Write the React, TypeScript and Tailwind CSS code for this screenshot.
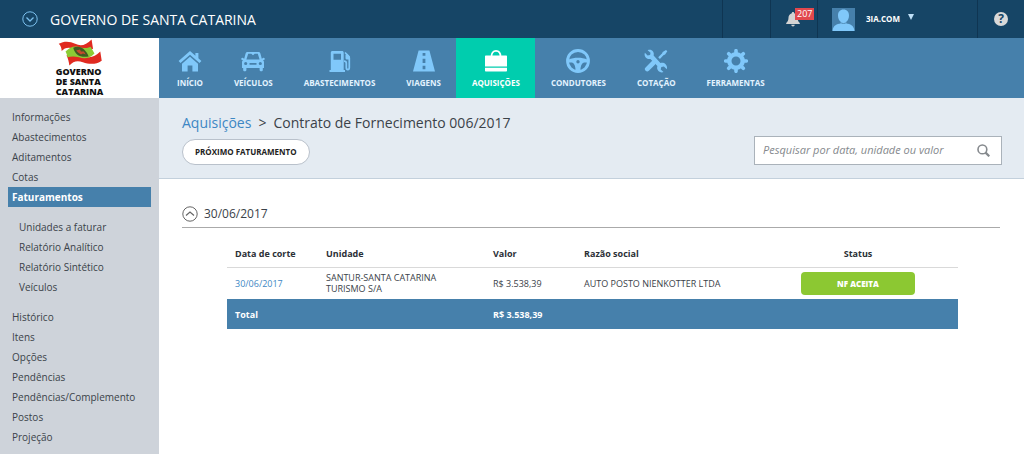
import { useState } from 'react';
import type { ReactNode } from 'react';

interface NavItem {
  label: string;
  icon: ReactNode;
  active?: boolean;
}

interface Billing {
  date: string;
  unit: string;
  value: string;
  company: string;
  status: string;
}

const navItems: NavItem[] = [
  {
    label: 'INÍCIO',
    icon: (
      <>
        <path d="M12 2 0.6 12l1.9 2.1L12 5.8l9.500 8.300 1.900-2.100-3-2.700V4h-3v2.700z" />
        <path d="M12 7.800 4 14.800V22.500h5.600v-6h4.800v6H20v-7.700z" />
      </>
    ),
  },
  {
    label: 'VEÍCULOS',
    icon: (
      <path
        fillRule="evenodd"
        d="M6.500 3h11c1 0 1.700.6 1.900 1.500l1.400 5.300 1.200-.9c.6-.4 1.500 0 1.700.7.200.7-.2 1.200-.9 1.300l-.9.200c.8.600 1.100 1.400 1.100 2.400V19h-1.200v2c0 .8-.6 1.300-1.500 1.300s-1.700-.5-1.700-1.300v-2H5.400v2c0 .8-.7 1.300-1.700 1.300S2.200 21.800 2.200 21v-2H1v-5.500c0-1 .3-1.800 1.100-2.400l-.9-.2C.5 10.800.1 10.300.3 9.600.5 8.900 1.400 8.500 2 8.900l1.200.9 1.400-5.300C4.800 3.600 5.500 3 6.500 3zm.7 1.700L5.400 10.600h13.200l-1.800-5.900h-3.100L12 6.200l-1.700-1.500zM4.700 12.900a1.600 1.600 0 1 0 0 3.200 1.600 1.600 0 0 0 0-3.200zm14.600 0a1.600 1.600 0 1 0 0 3.200 1.600 1.600 0 0 0 0-3.200zM8.500 14v1.800h7V14z"
      />
    ),
  },
  {
    label: 'ABASTECIMENTOS',
    icon: (
      <>
        <path fillRule="evenodd" d="M4.500 2h9.500c1 0 1.700.7 1.700 1.700V21H17v2H1.500v-2h1.300V3.700C2.800 2.700 3.500 2 4.500 2zm1 2.800v6h7.500v-6z" />
        <path d="M17 3.500l3.300 3.300c.7.700 1 1.400 1 2.300v9.300c0 1.500-.6 2.200-1.500 2.200s-1.500-.7-1.500-2v-4.400c0-1.300-.7-2-2.300-2" fill="none" stroke="currentColor" strokeWidth="1.7" />
        <path d="M17.500 6v3.200c0 .8.900 1.300 2 1.300h2V7.300L18.800 4.500z" />
      </>
    ),
  },
  {
    label: 'VIAGENS',
    icon: (
      <path fillRule="evenodd" d="M6.600 1.500h10.800L23 22.500H1zM10.600 4v2.800h2.800V4zm0 5.800v4.200h2.800V9.800zm0 7v3.400h2.800v-3.400z" />
    ),
  },
  {
    label: 'AQUISIÇÕES',
    active: true,
    icon: (
      <>
        <path d="M7.500 7.500C7.500 4.200 9 1.800 12 1.800s4.500 2.400 4.500 5.700" fill="none" stroke="currentColor" strokeWidth="1.7" />
        <path d="M2 6.500h20c.6 0 1 .4 1 1v10H1v-10c0-.6.400-1 1-1zM1 18.800h22v2.700c0 .6-.4 1-1 1H2c-.6 0-1-.4-1-1z" />
      </>
    ),
  },
  {
    label: 'CONDUTORES',
    icon: (
      <>
        <circle cx="12" cy="12" r="10.5" fill="none" stroke="currentColor" strokeWidth="2.8" />
        <path fillRule="evenodd" d="M2.500 10.500C5.500 9.300 8.600 8.800 12 8.800s6.500.5 9.500 1.700v3h-2.600c-2.700 0-4.300 2.600-4.500 8H9.600c-.2-5.400-1.800-8-4.500-8H2.500zM12 11a1.700 1.700 0 1 0 0 3.400 1.700 1.700 0 0 0 0-3.400z" />
      </>
    ),
  },
  {
    label: 'COTAÇÃO',
    icon: (
      <>
        <path d="M22 1l1.300 1.300-2.200 3.200-1.700.7-3.500 3.700-1.700-1.700L18 4.600l.7-1.600z" />
        <path d="M9.300 14 3.200 20.100" stroke="currentColor" strokeWidth="4.6" strokeLinecap="round" />
        <path d="M3.600 1.200c2.200-.8 4.300-.3 5.400 1.200.9 1.300 1 2.500.6 4l6.800 7.600c2-.5 3.900-.1 5.200 1.200 1.400 1.400 1.800 3.300 1.200 5l-2.900-2.800-2.600.6-.6 2.600 2.800 2.500c-1.700.7-3.700.3-5.100-1.100-1.300-1.300-1.600-3.100-1-4.900L6.400 9.900c-1.700.3-3.300 0-4.500-1.200C.6 7.400.2 5.500.9 3.800l2.700 2.700L6.100 6l.4-2.300z" />
      </>
    ),
  },
  {
    label: 'FERRAMENTAS',
    icon: (
      <>
        <circle cx="12" cy="12" r="6.7" fill="none" stroke="currentColor" strokeWidth="4.4" />
        <path
          d="M12 4V1.700M12 20v2.300M4 12H1.700M20 12h2.300M6.300 6.300 4.700 4.700M17.700 17.700l1.600 1.600M6.300 17.700l-1.600 1.600M17.700 6.300l1.600-1.600"
          fill="none"
          stroke="currentColor"
          strokeWidth="3.6"
          strokeLinecap="round"
        />
      </>
    ),
  },
];

const menuTop = ['Informações', 'Abastecimentos', 'Aditamentos', 'Cotas', 'Faturamentos'];
const menuSub = ['Unidades a faturar', 'Relatório Analítico', 'Relatório Sintético', 'Veículos'];
const menuBottom = ['Histórico', 'Itens', 'Opções', 'Pendências', 'Pendências/Complemento', 'Postos', 'Projeção'];

const billings: Billing[] = [
  {
    date: '30/06/2017',
    unit: 'SANTUR-SANTA CATARINA TURISMO S/A',
    value: 'R$ 3.538,39',
    company: 'AUTO POSTO NIENKOTTER LTDA',
    status: 'NF ACEITA',
  },
];

function TopBar() {
  return (
    <header className="flex h-[38px] items-stretch bg-[#164566] text-white">
      <div className="flex flex-1 items-center gap-3 pl-[22px]">
        <button aria-label="Trocar órgão" className="text-[#7cc0ee]">
          <svg className="h-4 w-4" viewBox="0 0 16 16" fill="none" stroke="currentColor">
            <circle cx="8" cy="8" r="7.2" />
            <path d="M4.500 6.500 8 10l3.500-3.500" strokeWidth="1.3" />
          </svg>
        </button>
        <span className="text-[14px]">GOVERNO DE SANTA CATARINA</span>
      </div>
      <div className="w-12 border-l border-[#0f3552]" />
      <button aria-label="Notificações" className="relative w-[47px] border-l border-[#0f3552]">
        <svg className="absolute left-[15px] top-[12px] h-[15px] w-[14px] text-[#d3d3d3]" viewBox="0 0 14 15" fill="currentColor">
          <path d="M7 0c.7 0 1.200.5 1.200 1.200C10.300 1.800 11.500 3.600 11.500 5.500c0 2.500.8 4.200 2.300 5.500v1H.2v-1C1.700 9.700 2.500 8 2.500 5.500c0-1.900 1.200-3.700 3.300-4.300C5.800.5 6.300 0 7 0zM5.300 12.800h3.400c0 1-.7 1.700-1.700 1.700s-1.700-.7-1.700-1.700z" />
        </svg>
        <span className="absolute left-[24px] top-[8px] bg-[#e2484d] px-[2px] text-[9px] leading-[12px]">207</span>
      </button>
      <button className="flex w-40 items-center border-l border-[#0f3552] pl-[14px] text-[8px] font-bold">
        <svg className="mr-[11px] h-[23px] w-[23px]" viewBox="0 0 23 23">
          <path d="M0 0h23v23H0z" fill="#4680ab" />
          <path d="M11.500 1.500c3.500 0 5.500 2.500 5.500 6 0 2.700-1.100 5-2.700 6.300v1.700c3.700.6 7.500 1.900 8 6.500v1H.700v-1c.5-4.600 4.300-5.900 8-6.500v-1.700C7.100 12.500 6 10.200 6 7.500c0-3.500 2-6 5.500-6z" fill="#80c8fa" />
          <path d="M8.500 14.600c2 1.200 4 1.200 6 0" fill="none" stroke="#4680ab" strokeWidth=".8" />
        </svg>
        3IA.COM
        <svg className="mb-1 ml-2 h-[6px] w-[6px] text-[#bfe0f7]" viewBox="0 0 6 6" fill="currentColor">
          <path d="M0 0h6L3 6z" />
        </svg>
      </button>
      <button aria-label="Ajuda" className="flex w-[47px] items-center justify-center border-l border-[#0f3552]">
        <span className="flex h-[14px] w-[14px] items-center justify-center rounded-full bg-[#d9d9d9] text-[12px] font-bold text-[#164566]">?</span>
      </button>
    </header>
  );
}

function Logo() {
  return (
    <div className="flex h-[60px] flex-col items-center bg-white pt-px">
      <svg className="h-[28px] w-[48px] shrink-0" viewBox="0 0 48 29">
        <path d="M2 5c6-3.500 12-2.500 17 0 6 3 11 1.500 17-4.500l1.500 9.500C30 14 24 12 18 10 12 8 8 9 5 12.500 5 9.500 4 7 2 5z" fill="#e02a20" />
        <path d="M10 17c7-3 12-1.500 17 .5 7 2.500 12 1.500 18-4.500l1.500 9.500C40 27 33 26 27 24c-6-2-10-1-14 3.500-.5-4-1.500-8-3-10.500z" fill="#e02a20" />
        <path d="M9 13c4-4 8-6 13-5 5 1.500 9 2 13 0l4 7c-5 5-10 6-16 4-5-1.500-9-1-12 0 0-2-1-4-2-6z" fill="#8ccb35" />
        <path d="M17 9c6-2.500 12 0 16 9-8 1.500-14-1-16-9z" fill="#3f5a22" />
        <path d="M20 12l4-1 1 2 3 0 2 3-3-1-2 1-3-2z" fill="#c54a2c" />
      </svg>
      <div className="text-[9px] font-extrabold leading-[10px] text-[#111]">
        GOVERNO
        <br />
        DE SANTA
        <br />
        CATARINA
      </div>
    </div>
  );
}

function SideLink({ label, active }: { label: string; active?: boolean }) {
  return (
    <a
      href="#"
      className={`block px-1 ${active ? 'bg-[#4680ab] font-bold text-white' : 'text-[#3b4249]'}`}
    >
      {label}
    </a>
  );
}

function Sidebar() {
  return (
    <aside className="w-[159px] shrink-0 bg-[#ced3da]">
      <Logo />
      <nav className="px-2 pb-1 pt-[9px] text-[10px] leading-[20px]">
        <ul>
          {menuTop.map((label) => (
            <li key={label}>
              <SideLink label={label} active={label === 'Faturamentos'} />
            </li>
          ))}
        </ul>
        <ul className="my-[10px] pl-[7px]">
          {menuSub.map((label) => (
            <li key={label}>
              <SideLink label={label} />
            </li>
          ))}
        </ul>
        <ul>
          {menuBottom.map((label) => (
            <li key={label}>
              <SideLink label={label} />
            </li>
          ))}
        </ul>
      </nav>
    </aside>
  );
}

function MainNav() {
  return (
    <nav className="flex h-[60px] bg-[#4680ab] pl-[2px]">
      {navItems.map((item) => (
        <a
          key={item.label}
          href="#"
          className={`flex flex-col items-center pl-4 pr-[15px] pt-[11px] text-[8px] font-bold leading-[14px] ${
            item.active ? 'bg-[#00cdae] text-white' : 'text-[#e3f3ff]'
          }`}
        >
          <svg className={`mb-[3px] h-6 w-6 ${item.active ? 'text-white' : 'text-[#80c8fa]'}`} viewBox="0 0 24 24" fill="currentColor">
            {item.icon}
          </svg>
          {item.label}
        </a>
      ))}
    </nav>
  );
}

function PageHeader() {
  return (
    <div className="flex items-end justify-between border-b border-[#c3d0dc] bg-[#e4ebf2] pb-[13px] pl-[23px] pr-[22px] pt-[13px]">
      <div>
        <h1 className="flex gap-[7px] text-[14px] leading-6 text-[#3b4249]">
          <a href="#" className="text-[#3d87c4]">Aquisições</a>
          <span>&gt;</span>
          <span>Contrato de Fornecimento 006/2017</span>
        </h1>
        <button className="mt-1 h-[26px] rounded-full border border-[#b9c1cb] bg-white px-3 text-[8px] font-bold text-[#222]">
          PRÓXIMO FATURAMENTO
        </button>
      </div>
      <form className="flex h-[29px] w-[248px] items-center border border-[#aab2ba] bg-white pl-2 pr-[11px]">
        <input
          type="text"
          aria-label="Pesquisar"
          placeholder="Pesquisar por data, unidade ou valor"
          className="min-w-0 flex-1 text-[11px] italic outline-none placeholder:text-[#85898d]"
        />
        <button type="button" aria-label="Buscar" className="text-[#85898d]">
          <svg className="h-[13px] w-[13px]" viewBox="0 0 13 13" fill="none" stroke="currentColor" strokeWidth="1.6">
            <circle cx="5.4" cy="5.4" r="4.4" />
            <path d="m8.600 8.600 3.700 3.700" strokeWidth="2.2" />
          </svg>
        </button>
      </form>
    </div>
  );
}

function BillingTable() {
  return (
    <table className="w-full table-fixed text-left text-[9px] leading-[11px] text-[#3b4249]">
      <thead>
        <tr className="h-[27px] border-b border-[#d9d9d9] text-[#2b3036]">
          <th className="w-[91px] px-2">Data de corte</th>
          <th className="w-[167px] px-2">Unidade</th>
          <th className="w-[91px] px-2">Valor</th>
          <th className="w-[182px] px-2">Razão social</th>
          <th className="text-center">Status</th>
        </tr>
      </thead>
      <tbody>
        {billings.map((row) => (
          <tr key={row.date} className="h-8">
            <td className="px-2">
              <a href="#" className="text-[#3d87c4]">{row.date}</a>
            </td>
            <td className="pl-2 pr-10">{row.unit}</td>
            <td className="px-2">{row.value}</td>
            <td className="px-2">{row.company}</td>
            <td className="text-center">
              <span className="inline-block w-[114px] rounded bg-[#8cc832] align-middle text-[8px] font-extrabold leading-[23px] text-white">
                {row.status}
              </span>
            </td>
          </tr>
        ))}
      </tbody>
      <tfoot>
        <tr className="h-[30px] bg-[#4680ab] font-bold text-white">
          <td colSpan={2} className="px-2">Total</td>
          <td colSpan={3} className="px-2">R$ 3.538,39</td>
        </tr>
      </tfoot>
    </table>
  );
}

export default function App() {
  const [open, setOpen] = useState(true);

  return (
    <div className="flex min-h-screen flex-col bg-white font-['Open_Sans',sans-serif]">
      <TopBar />
      <div className="flex flex-1">
        <Sidebar />
        <div className="min-w-0 flex-1">
          <MainNav />
          <PageHeader />
          <main className="pl-[23px] pr-6 pt-[25px]">
            <button
              onClick={() => setOpen(!open)}
              className="flex w-full items-center gap-[6px] border-b border-[#aaa] pb-[3px] text-[12px] leading-5 text-[#3b4249]"
            >
              <svg className="h-4 w-4 text-[#666]" viewBox="0 0 16 16" fill="none" stroke="currentColor">
                <circle cx="8" cy="8" r="7.2" />
                <path d={open ? 'M4 9.500 8 6l4 3.500' : 'M4 6.500 8 10l4-3.500'} strokeWidth="1.2" />
              </svg>
              30/06/2017
            </button>
            {open && (
              <div className="pl-[45px] pr-[42px] pt-3">
                <BillingTable />
              </div>
            )}
          </main>
        </div>
      </div>
    </div>
  );
}
